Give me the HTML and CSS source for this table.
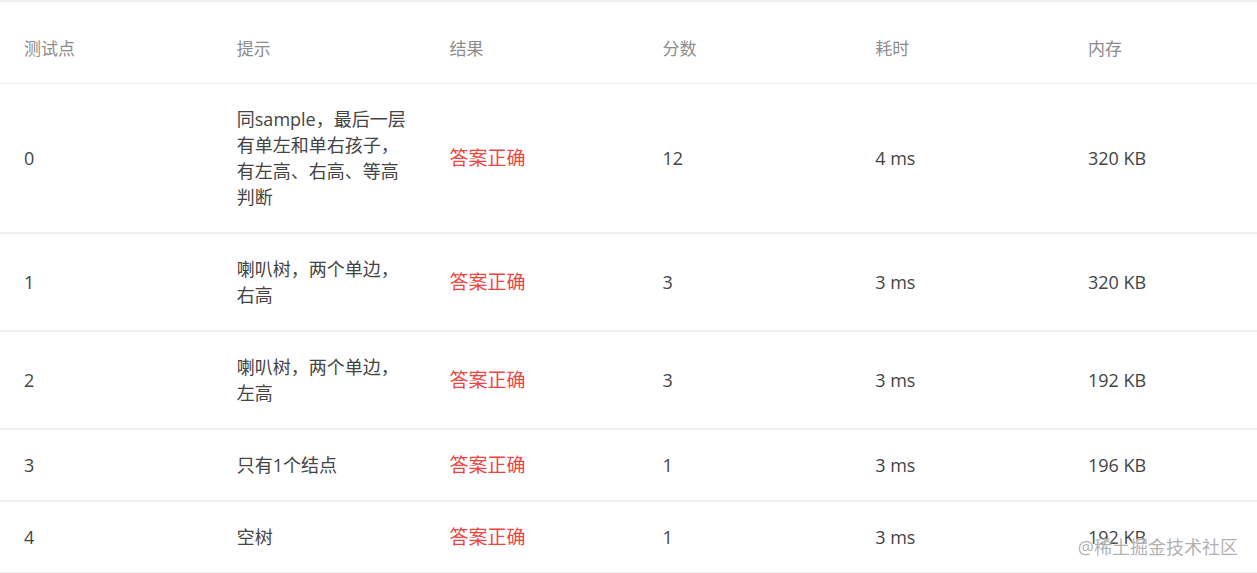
FILE: index.html
```html
<!DOCTYPE html>
<html lang="zh">
<head>
<meta charset="utf-8">
<link rel="stylesheet" href="styles.css">
<title>测试点</title>
</head>
<body>
<div class="page">
  <div class="table">
    <div class="row head">
      <div class="cell">测试点</div>
      <div class="cell">提示</div>
      <div class="cell">结果</div>
      <div class="cell">分数</div>
      <div class="cell">耗时</div>
      <div class="cell">内存</div>
    </div>
    <div class="row">
      <div class="cell">0</div>
      <div class="cell hint">同sample，最后一层有单左和单右孩子，有左高、右高、等高判断</div>
      <div class="cell ok">答案正确</div>
      <div class="cell">12</div>
      <div class="cell">4 ms</div>
      <div class="cell">320 KB</div>
    </div>
    <div class="row">
      <div class="cell">1</div>
      <div class="cell hint">喇叭树，两个单边，右高</div>
      <div class="cell ok">答案正确</div>
      <div class="cell">3</div>
      <div class="cell">3 ms</div>
      <div class="cell">320 KB</div>
    </div>
    <div class="row">
      <div class="cell">2</div>
      <div class="cell hint">喇叭树，两个单边，左高</div>
      <div class="cell ok">答案正确</div>
      <div class="cell">3</div>
      <div class="cell">3 ms</div>
      <div class="cell">192 KB</div>
    </div>
    <div class="row">
      <div class="cell">3</div>
      <div class="cell hint">只有1个结点</div>
      <div class="cell ok">答案正确</div>
      <div class="cell">1</div>
      <div class="cell">3 ms</div>
      <div class="cell">196 KB</div>
    </div>
    <div class="row">
      <div class="cell">4</div>
      <div class="cell hint">空树</div>
      <div class="cell ok">答案正确</div>
      <div class="cell">1</div>
      <div class="cell">3 ms</div>
      <div class="cell">192 KB</div>
    </div>
  </div>
  <div class="watermark">@稀土掘金技术社区</div>
</div>
</body>
</html>
```

FILE: styles.css
```css
html, body {
  margin: 0;
  padding: 0;
  background: #ffffff;
}
body {
  font-family: "Open Sans", "Noto Sans CJK SC", sans-serif;
  color: #444444;
  overflow: hidden;
}
.page {
  position: relative;
  width: 1257px;
  height: 573px;
  overflow: hidden;
}
.table {
  width: 1277px;
  border-top: 2px solid #efefef;
}
.row {
  display: grid;
  grid-template-columns: repeat(6, 212.8px);
  align-items: center;
  border-bottom: 2px solid #efefef;
  padding: 22px 0;
  font-size: 18px;
  line-height: 26px;
}
.row.head {
  padding: 34px 0 21px;
  font-size: 17px;
  color: #8c8c8c;
  border-bottom-width: 1px;
}
.cell {
  padding-left: 24px;
  box-sizing: border-box;
}
.hint {
  padding-right: 16px;
}
.ok {
  color: #f0453f;
  font-size: 19px;
}
.watermark {
  position: absolute;
  right: 19px;
  top: 534px;
  font-size: 18px;
  line-height: 26px;
  color: rgba(150, 150, 150, 0.75);
  text-shadow: 0 0 2px #ffffff, 0 0 1px #ffffff;
}
```
